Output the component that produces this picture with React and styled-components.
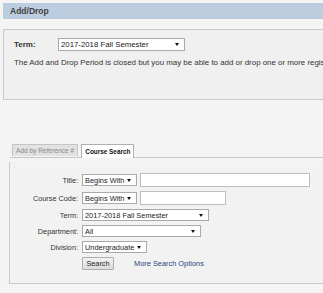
import React from "react";
import styled, { createGlobalStyle } from "styled-components";

const GlobalStyle = createGlobalStyle`
  html, body {
    margin: 0;
    padding: 0;
    background: #f4f4f4;
    overflow: hidden;
  }
  body {
    font-family: "Liberation Sans", Arial, sans-serif;
    color: #333;
  }
`;

const Page = styled.div`
  padding: 3px 0 0 3px;
  width: 460px;
`;

const Header = styled.div`
  height: 16px;
  line-height: 16px;
  background: #bccde0;
  padding-left: 7px;
  font-size: 8.5px;
  font-weight: bold;
  color: #3f3f3f;
`;

const TermPanel = styled.div`
  margin-top: 10px;
  height: 61px;
  border: 1px solid #cacaca;
  background: #f0f0f0;
  padding: 8px 0 0 10px;
`;

const TermRow = styled.div`
  display: flex;
  align-items: center;
`;

const TermLabel = styled.span`
  width: 44px;
  font-size: 8px;
  font-weight: bold;
  color: #333;
`;

const Dropdown = styled.div`
  box-sizing: border-box;
  display: flex;
  align-items: center;
  justify-content: space-between;
  width: ${(p) => p.$w}px;
  height: ${(p) => p.$h || 12}px;
  padding: 0 5px 0 2px;
  background: #fff;
  border: 1px solid #a9a9a9;
  font-size: ${(p) => p.$fs || 7.4}px;
  color: #222;
  white-space: nowrap;
`;

const Arrow = styled.span`
  width: 0;
  height: 0;
  border-left: 2.5px solid transparent;
  border-right: 2.5px solid transparent;
  border-top: 3px solid #111;
`;

const Notice = styled.p`
  margin: 7px 0 0 0;
  font-size: 7.9px;
  white-space: nowrap;
  color: #333;
`;

const Tabs = styled.div`
  display: flex;
  gap: 3px;
  margin: 44px 0 0 7px;
  padding-left: 2px;
  border-bottom: 1px solid #c8c8c8;
  align-items: flex-end;
`;

const Tab = styled.div`
  box-sizing: border-box;
  height: ${(p) => (p.$active ? 14 : 12)}px;
  line-height: ${(p) => (p.$active ? 13 : 11)}px;
  padding: 0 ${(p) => (p.$active ? 3 : 3)}px;
  font-size: ${(p) => (p.$active ? 6.4 : 6.6)}px;
  font-weight: ${(p) => (p.$active ? "bold" : "normal")};
  color: ${(p) => (p.$active ? "#111" : "#8a8a8a")};
  background: ${(p) => (p.$active ? "#fff" : "#e2e2e2")};
  border: 1px solid ${(p) => (p.$active ? "#b0b0b0" : "#c4c4c4")};
  border-bottom: none;
  margin-bottom: ${(p) => (p.$active ? "-1px" : "1px")};
  white-space: nowrap;
`;

const SearchPanel = styled.div`
  margin: 4px 0 0 6px;
  border-left: 1px solid #cacaca;
  border-bottom: 1px solid #cacaca;
  background: #f2f2f2;
  padding: 11px 0 13px 0;
  display: grid;
  grid-template-columns: 68px auto;
  column-gap: 4px;
  row-gap: 4px;
  align-items: center;
`;

const Label = styled.label`
  text-align: right;
  font-size: 7.3px;
  color: #333;
`;

const Field = styled.div`
  display: flex;
  align-items: center;
  gap: 3px;
`;

const TextBox = styled.input`
  box-sizing: border-box;
  width: ${(p) => p.$w}px;
  height: 14px;
  margin: 0;
  padding: 0 2px;
  border: 1px solid #bdbdbd;
  background: #fff;
  outline: none;
`;

const Button = styled.button`
  box-sizing: border-box;
  width: 32px;
  height: 13px;
  padding: 0;
  margin: 0;
  font-family: "Liberation Sans", Arial, sans-serif;
  font-size: 7.3px;
  color: #222;
  background: linear-gradient(#f3f3f3, #dcdcdc);
  border: 1px solid #adadad;
  border-radius: 1px;
`;

const Link = styled.a`
  margin-left: 17px;
  font-size: 7.4px;
  color: #27457a;
  text-decoration: none;
`;

function Select({ w, h, fs, children }) {
  return (
    <Dropdown $w={w} $h={h} $fs={fs}>
      <span>{children}</span>
      <Arrow />
    </Dropdown>
  );
}

export default function App() {
  return (
    <Page>
      <GlobalStyle />
      <Header>Add/Drop</Header>
      <TermPanel>
        <TermRow>
          <TermLabel>Term:</TermLabel>
          <Select w={127} h={13} fs={7.8}>
            2017-2018 Fall Semester
          </Select>
        </TermRow>
        <Notice>
          The Add and Drop Period is closed but you may be able to add or drop
          one or more registrations.
        </Notice>
      </TermPanel>

      <Tabs>
        <Tab>Add by Reference #</Tab>
        <Tab $active>Course Search</Tab>
      </Tabs>

      <SearchPanel>
        <Label>Title:</Label>
        <Field>
          <Select w={55}>Begins With</Select>
          <TextBox $w={170} />
        </Field>

        <Label>Course Code:</Label>
        <Field>
          <Select w={55}>Begins With</Select>
          <TextBox $w={86} />
        </Field>

        <Label>Term:</Label>
        <Field>
          <Select w={127}>2017-2018 Fall Semester</Select>
        </Field>

        <Label>Department:</Label>
        <Field>
          <Select w={119}>All</Select>
        </Field>

        <Label>Division:</Label>
        <Field>
          <Select w={65}>Undergraduate</Select>
        </Field>

        <span />
        <Field>
          <Button>Search</Button>
          <Link href="#">More Search Options</Link>
        </Field>
      </SearchPanel>
    </Page>
  );
}
